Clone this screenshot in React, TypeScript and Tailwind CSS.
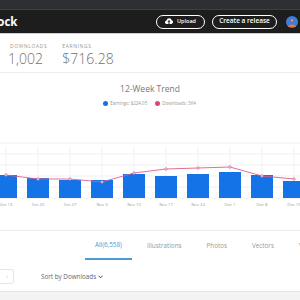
import React from "react";

const bars = [
  { x: 6, top: 178, pt: 178, label: "Oct 13" },
  { x: 38, top: 181, pt: 182, label: "Oct 20" },
  { x: 70, top: 183, pt: 182, label: "Oct 27" },
  { x: 102, top: 183, pt: 185, label: "Nov 3" },
  { x: 134, top: 177, pt: 176, label: "Nov 10" },
  { x: 166, top: 179, pt: 172, label: "Nov 17" },
  { x: 198, top: 177, pt: 171, label: "Nov 24" },
  { x: 230, top: 175, pt: 170, label: "Dec 1" },
  { x: 262, top: 178, pt: 179, label: "Dec 8" },
  { x: 294, top: 184, pt: 182, label: "Dec 15" },
];

const Y0 = 140;

function Chart() {
  const base = 201 - Y0;
  const hLines = [146, 157, 168, 179, 190, 201];
  return (
    <svg width="300" height="74" viewBox="0 0 300 74" className="block">
      {hLines.map((y) => (
        <line key={y} x1="-20" x2="320" y1={y - Y0} y2={y - Y0} stroke="#ececec" strokeWidth="0.8" />
      ))}
      {bars.map((b) => (
        <line key={"v" + b.x} x1={b.x} x2={b.x} y1={10} y2={base} stroke="#ececec" strokeWidth="0.8" />
      ))}
      {bars.map((b) => (
        <rect key={"r" + b.x} x={b.x - 11} y={b.top - Y0} width="22" height={base - (b.top - Y0)} fill="#1473e6" />
      ))}
      <polyline
        points={bars.map((b) => `${b.x},${b.pt - Y0}`).join(" ")}
        fill="none"
        stroke="#d9608f"
        strokeWidth="0.9"
      />
      {bars.map((b) => (
        <circle key={"c" + b.x} cx={b.x} cy={b.pt - Y0} r="1.3" fill="#f4d6e2" stroke="#d9608f" strokeWidth="0.6" />
      ))}
      {bars.map((b) => (
        <text
          key={"t" + b.x}
          x={b.x}
          y={69}
          textAnchor="middle"
          fontSize="4.2"
          fill="#999"
          fontFamily="'Open Sans', sans-serif"
        >
          {b.label}
        </text>
      ))}
    </svg>
  );
}

function UploadIcon() {
  return (
    <svg width="8" height="7" viewBox="0 0 16 14">
      <path
        d="M4 12 C1.5 12 0 10.3 0 8.3 C0 6.4 1.4 5 3.2 4.8 C3.8 2.2 5.8 0.5 8.3 0.5 C10.9 0.5 12.8 2.3 13.2 4.7 C14.9 5 16 6.4 16 8.2 C16 10.3 14.4 12 12.2 12 Z"
        fill="#ffffff"
      />
      <path d="M8 4 L5 7.3 H7 V12 H9 V7.3 H11 Z" fill="#1d1d1d" />
    </svg>
  );
}

function Avatar() {
  return (
    <svg width="12" height="12" viewBox="0 0 12 12">
      <circle cx="6" cy="6" r="6" fill="#3c7fd9" />
      <circle cx="6" cy="4.5" r="2" fill="#8a5bb8" />
      <path d="M2 11 C2.5 7.5 9.5 7.5 10 11 Z" fill="#e8793a" />
      <circle cx="6" cy="4.5" r="1" fill="#f0b36b" />
    </svg>
  );
}

export default function App() {
  return (
    <div
      className="w-[300px] h-[300px] overflow-hidden bg-white flex flex-col"
      style={{ fontFamily: "'Open Sans', 'Noto Sans', sans-serif" }}
    >
      <div className="h-[10px] shrink-0 bg-[#2d2f33] border-b border-[#3e4043]" />
      <div className="h-[24px] shrink-0 bg-[#1d1d1d] flex items-center border-b border-[#cfcfcf]">
        <span className="ml-[-14px] text-white font-bold text-[11.5px] leading-none">Stock</span>
        <div className="ml-auto flex items-center">
          <div className="w-[49px] h-[14px] rounded-full border border-white flex items-center justify-center gap-[4px]">
            <UploadIcon />
            <span className="text-white text-[5.5px] font-semibold leading-none">Upload</span>
          </div>
          <div className="ml-[7px] w-[65px] h-[14px] rounded-full border border-white flex items-center justify-center">
            <span className="text-white text-[6.5px] font-semibold leading-none">Create a release</span>
          </div>
          <div className="ml-[9px] mr-[2px]">
            <Avatar />
          </div>
        </div>
      </div>

      <div className="h-[39px] shrink-0 border-b border-[#ececec] pl-[10px] pt-[8px] flex gap-[15px]">
        <div className="flex flex-col">
          <span className="text-[5px] leading-[8px] tracking-[0.12em] text-[#999]">DOWNLOADS</span>
          <span className="ml-[-2px] text-[14px] leading-[18px] font-light text-[#707070]">1,002</span>
        </div>
        <div className="flex flex-col">
          <span className="text-[5px] leading-[8px] tracking-[0.12em] text-[#999]">EARNINGS</span>
          <span className="text-[14px] leading-[18px] font-light text-[#707070]">$716.28</span>
        </div>
      </div>

      <div className="pt-[10px] flex flex-col items-center shrink-0">
        <span className="text-[8.5px] leading-[12px] text-[#777]">12-Week Trend</span>
        <div className="mt-[4px] h-[8px] flex items-center gap-[8px] ml-[-1px]">
          <div className="flex items-center gap-[2px]">
            <span className="w-[5px] h-[5px] rounded-full bg-[#1473e6]" />
            <span className="text-[4.5px] text-[#999]">Earnings: $224.05</span>
          </div>
          <div className="flex items-center gap-[2px]">
            <span className="w-[5px] h-[5px] rounded-full bg-[#e0447f]" />
            <span className="text-[4.5px] text-[#999]">Downloads: 364</span>
          </div>
        </div>
      </div>

      <div className="mt-[30px] shrink-0">
        <Chart />
      </div>

      <div className="mt-[19px] shrink-0 border-t border-[#ececec] h-[30px] flex pl-[85px] gap-[5px]">
        <div className="h-[29px] px-[10px] flex items-center border-b-2 border-[#4a9bd1]">
          <span className="text-[6.3px] text-[#4a9bd1]">All(6,558)</span>
        </div>
        <div className="h-[29px] px-[10px] flex items-center">
          <span className="text-[6.3px] text-[#999]">Illustrations</span>
        </div>
        <div className="h-[29px] px-[10px] flex items-center">
          <span className="text-[6.3px] text-[#999]">Photos</span>
        </div>
        <div className="h-[29px] px-[10px] flex items-center">
          <span className="text-[6.3px] text-[#999]">Vectors</span>
        </div>
        <div className="h-[29px] px-[10px] flex items-center">
          <span className="text-[6.3px] text-[#999]">Videos</span>
        </div>
      </div>

      <div className="h-[31px] shrink-0 flex items-center pt-[2px]">
        <div className="ml-[-6px] w-[20px] h-[15px] border border-[#e6e6e6] rounded-[2px] flex items-center justify-end pr-[5px]">
          <span className="text-[5px] text-[#bbb] leading-none">‹</span>
        </div>
        <div className="ml-[27px] flex items-center gap-[2px]">
          <span className="text-[6.3px] text-[#666]">Sort by Downloads</span>
          <svg width="5" height="4" viewBox="0 0 10 8">
            <path d="M1 1.5 L5 5.5 L9 1.5" fill="none" stroke="#444" strokeWidth="2" />
          </svg>
        </div>
      </div>

      <div className="flex-1 bg-[#f3f3f3] border-t border-[#e6e6e6]" />
    </div>
  );
}
